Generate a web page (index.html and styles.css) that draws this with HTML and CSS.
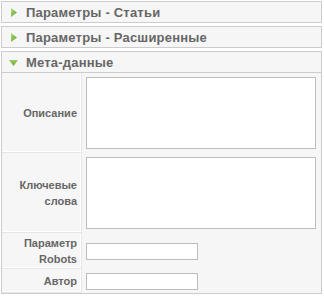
FILE: index.html
```html
<!DOCTYPE html>
<html>
<head>
<meta charset="utf-8">
<link rel="stylesheet" href="styles.css">
</head>
<body>
<div class="sliders">
  <div class="panel">
    <h3 class="toggler">
      <svg class="arrow-r" width="6" height="9" viewBox="0 0 6 9"><defs><linearGradient id="g1" x1="0" y1="0" x2="1" y2="1"><stop offset="0" stop-color="#b4dc7c"/><stop offset="1" stop-color="#5c9e2e"/></linearGradient></defs><polygon points="0,0 6,4.5 0,9" fill="url(#g1)"/></svg>
      <span>Параметры - Статьи</span>
    </h3>
  </div>
  <div class="panel">
    <h3 class="toggler">
      <svg class="arrow-r" width="6" height="9" viewBox="0 0 6 9"><defs><linearGradient id="g2" x1="0" y1="0" x2="1" y2="1"><stop offset="0" stop-color="#b4dc7c"/><stop offset="1" stop-color="#5c9e2e"/></linearGradient></defs><polygon points="0,0 6,4.5 0,9" fill="url(#g2)"/></svg>
      <span>Параметры - Расширенные</span>
    </h3>
  </div>
  <div class="panel">
    <h3 class="toggler open">
      <svg class="arrow-d" width="9" height="6" viewBox="0 0 9 6"><defs><linearGradient id="g3" x1="0" y1="0" x2="0" y2="1"><stop offset="0" stop-color="#9ccc62"/><stop offset="1" stop-color="#6aa83a"/></linearGradient></defs><polygon points="0,0 9,0 4.5,6" fill="url(#g3)"/></svg>
      <span>Мета-данные</span>
    </h3>
    <div class="paramlist">
      <div class="key">Описание</div>
      <div class="val"><textarea class="ta ta1"></textarea></div>
      <div class="key">Ключевые<br>слова</div>
      <div class="val"><textarea class="ta ta2"></textarea></div>
      <div class="key two">Параметр<br>Robots</div>
      <div class="val"><input class="txt" type="text"></div>
      <div class="key">Автор</div>
      <div class="val last"><input class="txt" type="text"></div>
    </div>
  </div>
</div>
</body>
</html>
```
FILE: styles.css
```css
html, body {
  margin: 0;
  padding: 0;
  background: #fff;
}
.sliders {
  margin: 1px 0 0 1px;
  width: 321px;
  font-family: "Liberation Sans", Arial, sans-serif;
}
.panel {
  border: 1px solid #ccc;
  margin-bottom: 3px;
  background: #f6f6f6;
}
.toggler {
  margin: 0;
  height: 20px;
  display: flex;
  align-items: center;
  padding-left: 9px;
  font-size: 13px;
  font-weight: bold;
  color: #666;
  letter-spacing: 0.2px;
}
.toggler.open {
  padding-left: 7px;
  border-bottom: 1px solid #ccc;
}
.arrow-r {
  display: block;
  margin-right: 9px;
}
.arrow-d {
  display: block;
  margin-right: 8px;
  margin-top: 1px;
}
.paramlist {
  display: grid;
  grid-template-columns: 80px 1fr;
}
.key {
  display: flex;
  align-items: center;
  justify-content: flex-end;
  text-align: right;
  padding-right: 4px;
  border-right: 1px solid #e6e6e6;
  border-bottom: 1px solid #e6e6e6;
  box-shadow: inset 0 -1px 0 #fff, inset -1px 0 0 #fff;
  font-size: 11px;
  font-weight: bold;
  color: #666;
  line-height: 16px;
}
.key.two {
  padding-top: 2px;
  padding-bottom: 1px;
}
.val {
  display: flex;
  align-items: center;
  padding: 4px 0 4px 4px;
}
.val.last {
  padding: 4px 0 3px 4px;
}
.ta {
  display: block;
  box-sizing: border-box;
  width: 230px;
  border: 1px solid #bdbdbd;
  background: #fff;
  margin: 0;
  padding: 0;
  resize: none;
}
.ta1 { height: 72px; }
.ta2 { height: 72px; }
.txt {
  display: block;
  box-sizing: border-box;
  width: 112px;
  height: 17px;
  border: 1px solid #bdbdbd;
  background: #fff;
  margin: 0;
  padding: 0;
}
```
